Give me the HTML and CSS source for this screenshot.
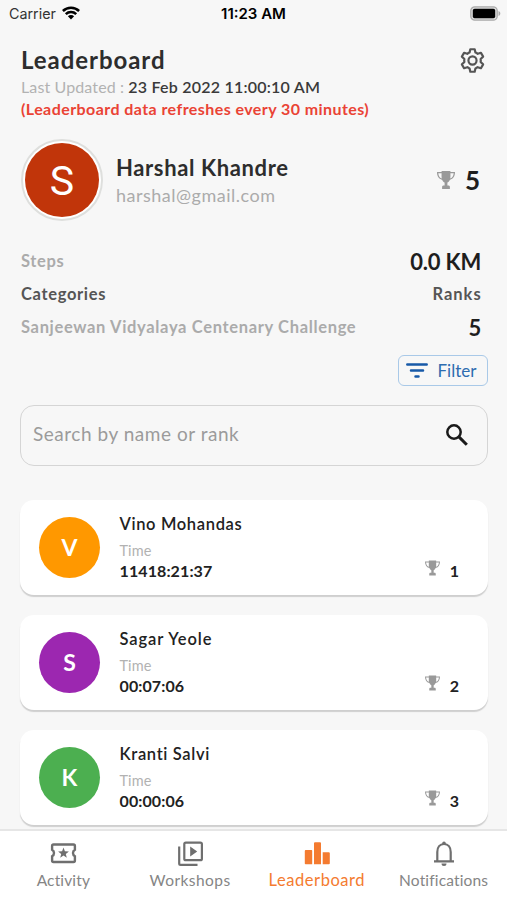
FILE: index.html
```html
<!DOCTYPE html>
<html lang="en">
<head>
<meta charset="utf-8">
<title>Leaderboard</title>
<link rel="stylesheet" href="styles.css">
</head>
<body>
<svg class="defs" aria-hidden="true">
  <symbol id="trophy" viewBox="0 0 18 18">
    <path d="M4.600 0h8.800v1.100H18c0 4-1.600 6.900-5.200 7.800-.7 1.400-1.600 2.300-2.400 2.700v3h1.100c.8 0 1.400.6 1.400 1.400V18H5.100v-2c0-.8.6-1.400 1.400-1.400h1.100v-3C6.800 11.200 5.900 10.300 5.200 8.900 1.600 8 0 5.100 0 1.100h4.600zM1.300 2.300c.2 2.700 1.200 4.400 3.400 5.200-.2-1.500-.2-3.300-.1-5.200zm12.100 0c.1 1.900.1 3.700-.1 5.200 2.200-.8 3.200-2.500 3.400-5.200z"/>
  </symbol>
</svg>
<div class="app">
  <div class="status">
    <div class="carrier"><span>Carrier</span>
      <svg class="wifi" viewBox="0 0 18 14"><g fill="none" stroke="#000" stroke-width="2.500"><path d="M.9 5a11.500 11.500 0 0 1 16.200 0"/><path d="M3.800 8.100a7.400 7.400 0 0 1 10.400 0"/></g><path d="M5.900 10.300a4.400 4.400 0 0 1 6.200 0L9 13.500z"/></svg>
    </div>
    <div class="clock">11:23 AM</div>
    <svg class="battery" viewBox="0 0 31 15"><rect x=".8" y=".8" width="26.400" height="13.400" rx="4" fill="#ddd" stroke="#aaa" stroke-width="1.300"/><rect x="2.800" y="2.800" width="22.400" height="9.400" rx="1.800"/><path d="M28.500 5c2.400.8 2.400 4.200 0 5z" fill="#aaa"/></svg>
  </div>

  <header class="header">
    <div>
      <h1 class="title">Leaderboard</h1>
      <p class="updated"><span class="updated-label">Last Updated : </span><span class="updated-time">23 Feb 2022 11:00:10 AM</span></p>
      <p class="notice">(Leaderboard data refreshes every 30 minutes)</p>
    </div>
    <svg class="gear" viewBox="0 0 24 24"><g fill="none" stroke="#555" stroke-width="2.100" stroke-linejoin="round"><path d="M9.900 1.200h4.200l.7 3.200q1.200.4 2.200 1.200l3.100-1 2.100 3.700-2.400 2.200q.3 1.500 0 3l2.400 2.200-2.100 3.700-3.100-1q-1 .8-2.200 1.200l-.7 3.200H9.900l-.7-3.200Q8 19.200 7 18.400l-3.100 1-2.100-3.700 2.400-2.200q-.3-1.500 0-3L1.800 8.300l2.100-3.700 3.100 1q1-.8 2.200-1.200z"/><circle cx="12" cy="12" r="3.900"/></g></svg>
  </header>

  <section class="profile">
    <div class="ring"><div class="photo">S</div></div>
    <div class="who"><div class="who-name">Harshal Khandre</div><div class="who-mail">harshal@gmail.com</div></div>
    <svg class="trophy-lg"><use href="#trophy"/></svg>
    <div class="rank-lg">5</div>
  </section>

  <section class="stats">
    <div class="row muted"><span>Steps</span><span class="value">0.0 KM</span></div>
    <div class="row"><span>Categories</span><span class="ranks">Ranks</span></div>
    <div class="row muted"><span>Sanjeewan Vidyalaya Centenary Challenge</span><span class="value">5</span></div>
  </section>

  <div class="tools">
    <div class="filter"><svg class="filter-icon" viewBox="0 0 22 15"><path d="M1.300 1.500h19.400M5 7.600h12M9.500 13.600h3" fill="none" stroke="#1759a8" stroke-width="2.500" stroke-linecap="round"/></svg><span>Filter</span></div>
  </div>

  <div class="search">
    <span class="placeholder">Search by name or rank</span>
    <svg class="lens" viewBox="0 0 22 22"><g fill="none" stroke="#1a1a1a" stroke-width="2.500"><circle cx="8" cy="8" r="6.700"/><path d="M12.900 12.900l7.900 7.900" stroke-width="3"/></g></svg>
  </div>

  <main class="list">
    <article class="card">
      <div class="avatar orange">V</div>
      <div class="info"><div class="name">Vino Mohandas</div><div class="label">Time</div><div class="time">11418:21:37</div></div>
      <svg class="trophy"><use href="#trophy"/></svg><div class="rank">1</div>
    </article>
    <article class="card">
      <div class="avatar purple">S</div>
      <div class="info"><div class="name wide">Sagar Yeole</div><div class="label">Time</div><div class="time">00:07:06</div></div>
      <svg class="trophy"><use href="#trophy"/></svg><div class="rank">2</div>
    </article>
    <article class="card">
      <div class="avatar green">K</div>
      <div class="info"><div class="name">Kranti Salvi</div><div class="label">Time</div><div class="time">00:00:06</div></div>
      <svg class="trophy"><use href="#trophy"/></svg><div class="rank">3</div>
    </article>
  </main>

  <nav class="nav">
    <div class="tab">
      <svg viewBox="0 0 28 28"><path d="M4.500 5.500h20q1.400 0 1.400 1.400v3.800a3.800 3.800 0 0 0 0 6.600v4.300q0 1.400-1.400 1.400h-20q-1.400 0-1.400-1.400v-4.300a3.800 3.800 0 0 0 0-6.600V6.900Q3.100 5.500 4.500 5.500z" fill="none" stroke="#6f6f6f" stroke-width="2.400"/><path d="M14.500 8.500l1.400 3.700 4 .2-3.100 2.500 1 3.900-3.300-2.200-3.300 2.200 1-3.900-3.100-2.500 4-.2z" fill="#6f6f6f"/></svg>
      <span>Activity</span>
    </div>
    <div class="tab">
      <svg viewBox="0 0 28 28"><g fill="none" stroke="#6f6f6f" stroke-width="2.200"><rect x="8.300" y="3.600" width="17.600" height="17.600" rx="1.500"/><path d="M3.200 7.500v16.900q0 1.400 1.400 1.400H21.500"/></g><path d="M14.200 7.400l7 5-7 5z" fill="#6f6f6f"/></svg>
      <span class="workshops">Workshops</span>
    </div>
    <div class="tab active">
      <svg viewBox="0 0 28 28"><path d="M2.700 11h5.800q.7 0 .7.700v13.600H2.600q-.8 0-.8-.8v-12.600q0-.9.900-.9zM12 3.200h5q1 0 1 1v21.100h-7V4.200q0-1 1-1zM19.700 13.300h6.100q1 0 1 1v10q0 1-1 1h-6.100z" fill="#f47b30"/></svg>
      <span>Leaderboard</span>
    </div>
    <div class="tab">
      <svg viewBox="0 0 28 28"><path d="M7.300 22.300V13c0-4.700 2.600-8 6.700-8s6.700 3.300 6.700 8v9.300M4 22.300h20" fill="none" stroke="#6f6f6f" stroke-width="2.200"/><path d="M12.200 5V4.300a1.800 1.800 0 0 1 3.600 0V5zM11.500 24.500h5a2.500 2.500 0 0 1-5 0z" fill="#6f6f6f"/></svg>
      <span>Notifications</span>
    </div>
  </nav>
</div>
</body>
</html>
```
FILE: styles.css
```css
* { box-sizing: border-box; }
body { margin: 0; background: #f7f7f7; font-family: Lato, "Open Sans", sans-serif; color: #2d2d2d; }
h1, p { margin: 0; }
.defs { display: none; }
svg { display: block; flex: none; }
.app { width: 507px; height: 900px; overflow: hidden; display: flex; flex-direction: column; white-space: nowrap; }

.status { height: 28px; flex: none; display: grid; grid-template-columns: 1fr auto 1fr; align-items: center; padding: 0 6px 0 9px; font-family: Inter, sans-serif; color: #000; }
.carrier { display: flex; align-items: center; gap: 6px; font-size: 14.300px; line-height: 28px; margin-top: -1px; color: #333; }
.wifi { width: 18px; height: 14px; margin-top: -1px; }
.clock { font-size: 15px; font-weight: 600; margin: -1px 3px 0 0; }
.battery { width: 31px; height: 15px; justify-self: end; margin-top: -2px; }

.header { height: 102px; flex: none; display: flex; justify-content: space-between; padding: 17px 22px 0 21px; }
.title { font-size: 24px; line-height: 30px; font-weight: 700; letter-spacing: .95px; }
.updated { font-size: 16px; line-height: 23px; }
.updated-label { color: #b2b2b2; letter-spacing: .12px; }
.updated-time { color: #3a3a3a; font-weight: 600; letter-spacing: .22px; }
.notice { font-size: 16px; line-height: 21px; font-weight: 700; color: #ea4335; letter-spacing: .43px; }
.gear { width: 25px; height: 25px; margin-top: 3px; }

.profile { height: 115px; flex: none; display: flex; align-items: flex-start; padding: 9px 27px 0 21px; }
.ring { width: 82px; height: 82px; border: 2px solid #dedfdd; border-radius: 50%; background: #fff; display: flex; align-items: center; justify-content: center; }
.photo { width: 74px; height: 74px; border-radius: 50%; background: #c1350a; color: #fff; font: 400 41px/76px Roboto, sans-serif; text-align: center; }
.who { margin: 15px auto 0 13px; }
.who-name { font-size: 22px; line-height: 28px; font-weight: 700; letter-spacing: .62px; }
.who-mail { font-size: 18px; line-height: 27px; color: #ababab; letter-spacing: .5px; }
.trophy-lg { width: 18px; height: 18px; fill: #999; margin: 32px 10px 0 0; }
.rank-lg { font-size: 26px; line-height: 32px; font-weight: 700; color: #1e1e1e; margin-top: 25px; }

.stats { padding: 0 26px 0 21px; height: 100px; flex: none; }
.row { height: 33px; display: flex; align-items: center; justify-content: space-between; font-size: 16.500px; line-height: 33px; font-weight: 700; letter-spacing: .66px; color: #555; }
.muted { color: #ababab; }
.ranks { margin-right: -.6px; letter-spacing: .95px; }
.value { font-size: 22px; font-weight: 700; letter-spacing: -.2px; color: #1e1e1e; }

.tools { height: 60px; flex: none; display: flex; justify-content: flex-end; align-items: flex-start; padding: 10px 19px 0; }
.filter { width: 90px; height: 31px; border: 1px solid #a9c9e8; border-radius: 6px; display: flex; align-items: center; padding-left: 7px; gap: 9.500px; font-size: 17px; color: #2e6cb0; }
.filter-icon { width: 22px; height: 15px; }

.search { height: 61px; flex: none; margin: 0 19px 0 20px; border: 1px solid #d5d5d5; border-radius: 14px; display: flex; justify-content: space-between; align-items: center; padding: 0 19px 5px 12px; }
.placeholder { font-size: 19px; color: #9b9b9b; letter-spacing: .53px; }
.lens { width: 22px; height: 22px; margin-top: 4px; }

.list { flex: 1; min-height: 0; overflow: hidden; padding: 34px 19px 0 20px; display: flex; flex-direction: column; gap: 20px; }
.card { height: 95px; flex: none; background: #fff; border-radius: 14px; box-shadow: 0 2px 1px #cfcfcf; display: flex; align-items: flex-start; padding: 0 29px 0 19px; }
.avatar { width: 61px; height: 61px; margin-top: 17px; border-radius: 50%; color: #fff; font-size: 23px; line-height: 61px; font-weight: 700; text-align: center; }
.orange { background: #ff9800; }
.purple { background: #9c27b0; }
.green { background: #4caf50; }
.info { margin: 12px auto 0 19.500px; }
.name { font-size: 16.500px; line-height: 25px; font-weight: 600; letter-spacing: .65px; color: #222; }
.wide { letter-spacing: .9px; }
.label { font-size: 14.500px; line-height: 20px; margin-top: 4px; color: #b2b2b2; letter-spacing: .1px; }
.time { font-size: 16px; line-height: 20px; font-weight: 700; color: #222; letter-spacing: .1px; }
.trophy { width: 15px; height: 16px; fill: #999; margin: 60px 10px 0 0; }
.rank { font-size: 16px; line-height: 20px; margin-top: 61px; font-weight: 700; color: #222; }

.nav { height: 71px; flex: none; background: #fff; border-top: 2px solid #e6e6e6; display: grid; grid-template-columns: repeat(4, 1fr); }
.tab { display: flex; flex-direction: column; align-items: center; padding-top: 8px; font-size: 15.500px; line-height: 24px; letter-spacing: .15px; color: #858585; }
.tab svg { width: 28px; height: 28px; }
.tab span { margin-top: 1px; }
.tab .workshops { letter-spacing: .45px; }
.active { color: #f47b30; font-size: 16.500px; letter-spacing: .55px; }
```
